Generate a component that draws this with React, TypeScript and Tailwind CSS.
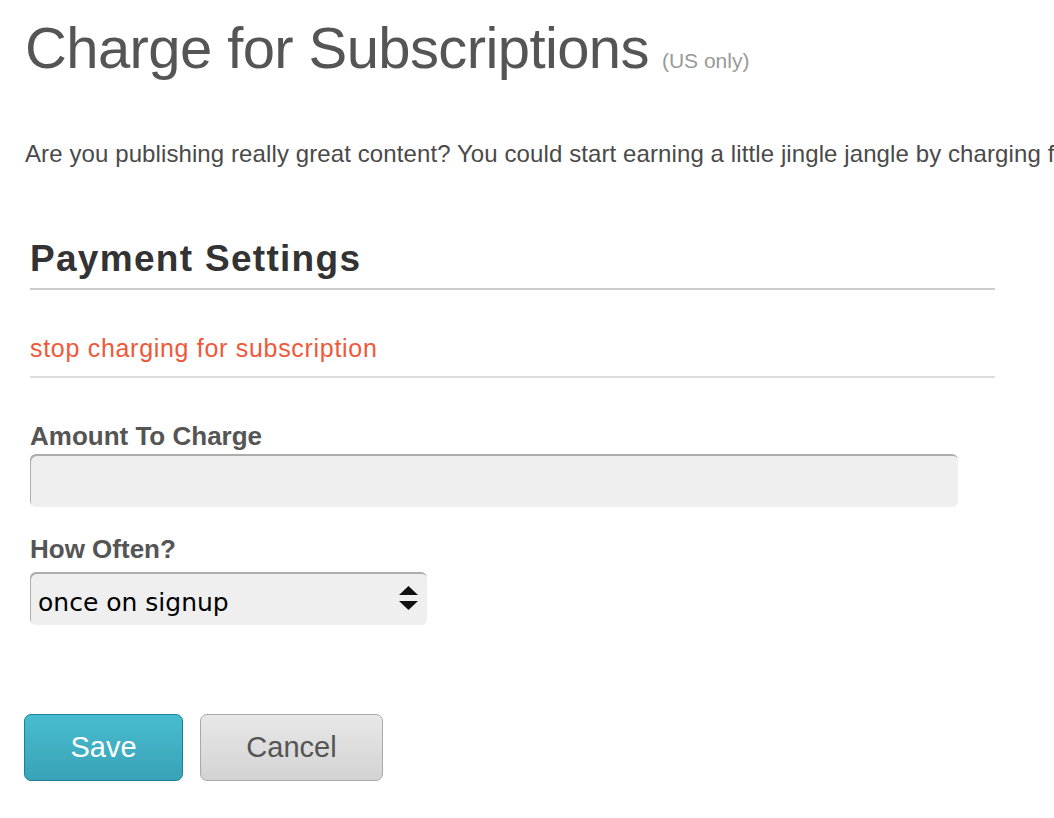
import React, {useState} from 'react';

function UpDownArrows() {
	return (
		<svg width="19" height="24" viewBox="0 0 19 24" className="pointer-events-none absolute right-[9px] top-[14px]">
			<path d="M9.5 0 L19 9 L0 9 Z" fill="#111"/>
			<path d="M0 15 L19 15 L9.5 24 Z" fill="#111"/>
		</svg>
	);
}

function App() {
	const [amount, setAmount] = useState<string>('');
	const [often, setOften] = useState<string>('once');

	return (
		<div className="min-h-screen w-full overflow-hidden bg-white font-['Liberation_Sans',Arial,sans-serif]">
			<div className="pl-[25px]">
				<h1 className="flex items-baseline pt-[19px] text-[58px] leading-[58px] tracking-[-0.6px] text-[#555]">
					Charge for Subscriptions
					<span className="ml-[13px] text-[21px] leading-[21px] tracking-normal text-[#999]">(US only)</span>
				</h1>

				<p className="mt-[65px] whitespace-nowrap text-[24px] leading-[24px] tracking-[0.1px] text-[#4a4a4a]">
					Are you publishing really great content? You could start earning a little jingle jangle by charging for subscriptions to your blog.
				</p>

				<div className="ml-[5px] w-[965px]">
					<h2 className="mt-[74px] border-b-2 border-[#cccccc] pb-[11px] text-[37px] font-bold leading-[37px] tracking-[1.3px] text-[#333]">
						Payment Settings
					</h2>

					<div className="border-b-2 border-[#dddddd] pt-[46px] pb-[12px]">
						<a href="#" className="text-[25px] leading-[25px] tracking-[0.7px] text-[#f0583a]">
							stop charging for subscription
						</a>
					</div>

					<label className="mt-[45px] block text-[26px] font-bold leading-[26px] text-[#555]">Amount To Charge</label>
					<input
						type="text"
						value={amount}
						onChange={(e) => setAmount(e.target.value)}
						className="mt-[5px] block h-[53px] w-[928px] rounded-[6px] bg-[#efefef] px-3 text-[24px] shadow-[inset_1px_2px_0_#adadad] outline-none"
					/>

					<label className="mt-[29px] block text-[26px] font-bold leading-[26px] text-[#555]">How Often?</label>
					<div className="relative mt-[10px] h-[53px] w-[397px]">
						<select
							value={often}
							onChange={(e) => setOften(e.target.value)}
							className="h-full w-full appearance-none rounded-[6px] bg-[#efefef] pl-[8px] pt-[8px] font-['DejaVu_Sans',sans-serif] text-[25px] text-black shadow-[inset_1px_2px_0_#adadad] outline-none"
						>
							<option value="once">once on signup</option>
							<option value="monthly">monthly</option>
							<option value="yearly">yearly</option>
						</select>
						<UpDownArrows/>
					</div>
				</div>

				<div className="-ml-[1px] mt-[89px] flex gap-[17px]">
					<button className="h-[67px] w-[159px] rounded-[7px] border-[1.5px] border-[#1c8096] bg-gradient-to-b from-[#48bdd0] to-[#39a2b6] text-[29px] text-white">
						Save
					</button>
					<button className="h-[67px] w-[183px] rounded-[7px] border-[1.5px] border-[#a9a9a9] bg-gradient-to-b from-[#e8e8e8] to-[#d3d3d3] text-[29px] text-[#555]">
						Cancel
					</button>
				</div>
			</div>
		</div>
	);
}

export default App;
